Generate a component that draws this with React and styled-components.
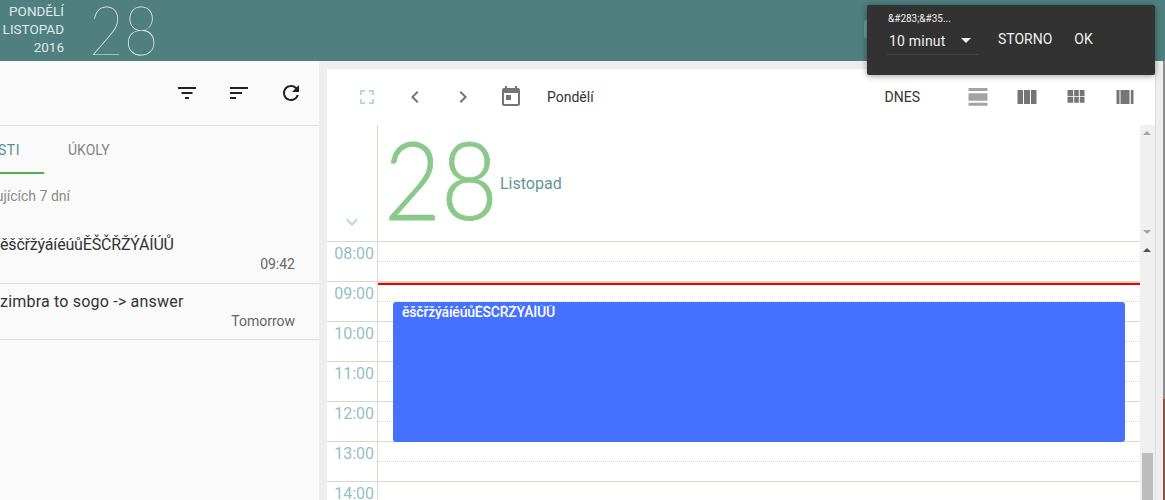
import React from 'react';
import styled, { createGlobalStyle } from 'styled-components';

const GlobalStyle = createGlobalStyle`
	html, body {
		margin: 0;
		padding: 0;
		background: #eeeeee;
		overflow: hidden;
	}
	body {
		font-family: Roboto, "Noto Sans", sans-serif;
	}
`;

const Page = styled.div`
	position: relative;
	width: 1165px;
	height: 500px;
	overflow: hidden;
	display: flex;
	flex-direction: column;
`;

const Header = styled.header`
	height: 61px;
	flex: none;
	background: #4f7f7f;
	display: flex;
	align-items: flex-start;
`;

const HeaderDate = styled.div`
	width: 64px;
	padding-top: 2px;
	text-align: right;
	color: #dfe9e9;
	font-size: 13.5px;
	line-height: 18px;
`;

const HeaderDay = styled.div`
	width: 70px;
	margin: 0 0 0 25px;
	color: #e6efee;
	font-family: Lato, sans-serif;
	font-weight: 100;
	font-size: 68px;
	line-height: 58px;
	transform: scaleX(0.88);
	transform-origin: left center;
`;

const HeaderChip = styled.div`
	width: 10px;
	height: 18px;
	margin: 20px 291px 0 auto;
	border-radius: 2px;
	background: #6d9a99;
`;

const Body = styled.div`
	flex: 1;
	display: flex;
	min-height: 0;
`;

const Sidebar = styled.aside`
	width: 319px;
	flex: none;
	background: #fafafa;
	display: flex;
	flex-direction: column;
	overflow: hidden;
`;

const SideToolbar = styled.div`
	height: 65px;
	flex: none;
	box-sizing: border-box;
	border-bottom: 1px solid #e0e0e0;
	display: flex;
	justify-content: flex-end;
	align-items: center;
	gap: 28px;
	padding: 0 16px 0 0;
	svg {
		display: block;
	}
`;

const Tabs = styled.div`
	height: 48px;
	flex: none;
	display: flex;
	font-size: 14px;
`;

const Tab = styled.div`
	width: ${(p) => p.$width}px;
	flex: none;
	display: flex;
	justify-content: ${(p) => (p.$active ? 'flex-end' : 'flex-start')};
	padding: ${(p) => (p.$active ? '15px 24px 0 0' : '15px 0 0 24px')};
	box-sizing: border-box;
	line-height: 18px;
	letter-spacing: ${(p) => (p.$active ? '0.5px' : '0')};
	white-space: nowrap;
	color: ${(p) => (p.$active ? '#5b8f8f' : '#858585')};
	border-bottom: ${(p) => (p.$active ? '2px solid #4caf50' : 'none')};
	height: 48px;
`;

const SectionNote = styled.div`
	width: 70px;
	height: 53px;
	flex: none;
	display: flex;
	justify-content: flex-end;
	padding-top: 13px;
	box-sizing: border-box;
	font-size: 14px;
	line-height: 18px;
	color: #8a8a8a;
	white-space: nowrap;
`;

const EventRow = styled.div`
	height: ${(p) => p.$height}px;
	flex: none;
	box-sizing: border-box;
	border-bottom: 1px solid #e0e0e0;
	padding: 8px 24px 0 0;
	display: flex;
	flex-direction: column;
`;

const EventTitle = styled.div`
	font-size: 16px;
	line-height: 20px;
	letter-spacing: ${(p) => p.$spacing}px;
	color: #333333;
	white-space: nowrap;
`;

const EventTime = styled.div`
	font-size: 14px;
	line-height: 18px;
	color: #666666;
	text-align: right;
`;

const Main = styled.main`
	flex: 1;
	min-width: 0;
	padding: 8px 8px 0 8px;
	display: flex;
`;

const Card = styled.section`
	flex: 1;
	min-width: 0;
	background: #ffffff;
	box-shadow: 1px 0 0 #dddddd;
	display: flex;
	flex-direction: column;
`;

const CalToolbar = styled.div`
	height: 56px;
	flex: none;
	padding-left: 16px;
	display: flex;
	align-items: center;
	svg {
		display: block;
	}
`;

const ToolIcon = styled.div`
	width: ${(p) => p.$width || 48}px;
	flex: none;
	display: flex;
	justify-content: center;
	color: ${(p) => p.$color || '#757575'};
`;

const ToolLabel = styled.div`
	font-size: 14px;
	color: #333333;
	margin-left: 12px;
	flex: 1;
`;

const TodayLabel = styled.div`
	font-size: 14px;
	color: #333333;
	margin-right: 33px;
`;

const ViewIcons = styled.div`
	display: flex;
	margin-right: 6px;
`;

const ScrollArea = styled.div`
	flex: 1;
	min-height: 0;
	display: flex;
`;

const Content = styled.div`
	flex: 1;
	min-width: 0;
	display: flex;
	flex-direction: column;
`;

const DayHead = styled.div`
	height: 117px;
	flex: none;
	box-sizing: border-box;
	display: flex;
	border-bottom: 1px solid #e0d8c6;
`;

const DayHeadGutter = styled.div`
	width: 50px;
	flex: none;
	border-right: 1px solid #e0d8c6;
	display: flex;
	justify-content: center;
	align-items: flex-end;
	padding-bottom: 7px;
	color: #b2dcdc;
	svg {
		display: block;
	}
`;

const DayHeadInfo = styled.div`
	flex: 1;
	display: flex;
	padding-left: 6px;
`;

const BigDay = styled.div`
	width: 112px;
	flex: none;
	font-family: Lato, sans-serif;
	font-weight: 300;
	font-size: 109px;
	line-height: 106px;
	color: #8bc98a;
	-webkit-text-stroke: 0.8px #8bc98a;
	transform: scaleX(0.9);
	transform-origin: left center;
`;

const MonthName = styled.div`
	font-size: 16px;
	color: #5f9797;
	margin: 49px 0 0 4px;
	line-height: 20px;
`;

const Grid = styled.div`
	position: relative;
	flex: 1;
	min-height: 0;
	overflow: hidden;
`;

const HourRow = styled.div`
	height: 40px;
	box-sizing: border-box;
	border-bottom: 1px solid #e0d8c6;
	display: flex;
`;

const HourLabel = styled.div`
	width: 47px;
	flex: none;
	padding-right: 3px;
	text-align: right;
	font-size: 16px;
	line-height: 24px;
	color: #96bfbf;
	border-right: 1px solid #e0d8c6;
`;

const HourSlot = styled.div`
	flex: 1;
	height: 20px;
	box-sizing: border-box;
	border-bottom: 1px dotted #e0d8c6;
`;

const NowLine = styled.div`
	position: absolute;
	left: 51px;
	right: 0;
	top: 41px;
	height: 2px;
	background: #f00000;
	box-shadow: 0 -1px 0 #e0d8c6;
`;

const EventBlock = styled.div`
	position: absolute;
	left: 66px;
	right: 15px;
	top: 60px;
	height: 140px;
	border-radius: 3px;
	background: #4671ff;
	color: #ffffff;
	padding: 3px 0 0 9px;
	box-sizing: border-box;
`;

const EventBlockTitle = styled.div`
	height: 14px;
	overflow: hidden;
	font-size: 14px;
	font-weight: 500;
	line-height: 14px;
	letter-spacing: -0.2px;
	white-space: nowrap;
`;

const ScrollBar = styled.div`
	width: 15px;
	flex: none;
	background: #f0f0f0;
	position: relative;
`;

const ScrollArrow = styled.div`
	position: absolute;
	left: 3px;
	top: ${(p) => p.$top}px;
	width: 0;
	height: 0;
	border-left: 4px solid transparent;
	border-right: 4px solid transparent;
	${(p) => (p.$up ? `border-bottom: 4px solid ${p.$color};` : `border-top: 4px solid ${p.$color};`)}
`;

const ScrollThumb = styled.div`
	position: absolute;
	left: 2px;
	right: 2px;
	top: 328px;
	bottom: 0;
	background: #bdbdbd;
`;

const PageScroll = styled.div`
	width: 2px;
	flex: none;
	background: linear-gradient(#8c8c8c 338px, #8d5540 338px);
`;

const Toast = styled.div`
	position: absolute;
	left: 867px;
	top: 5px;
	width: 288px;
	height: 70px;
	background: #323232;
	border-radius: 2px;
	box-shadow: 0 1px 6px rgba(0, 0, 0, 0.4);
	color: #f0f0f0;
`;

const ToastTitle = styled.div`
	position: absolute;
	left: 21px;
	top: 7px;
	font-size: 10px;
	line-height: 13px;
	white-space: nowrap;
`;

const ToastSelect = styled.div`
	position: absolute;
	left: 20px;
	top: 19px;
	width: 89px;
	height: 26px;
	padding: 4px 0 0 2px;
	border-bottom: 1px solid #444444;
	display: flex;
	justify-content: space-between;
	align-items: center;
	font-size: 14px;
	letter-spacing: 0.2px;
`;

const Caret = styled.span`
	width: 0;
	height: 0;
	margin: 0 7px 2px 0;
	border-left: 5px solid transparent;
	border-right: 5px solid transparent;
	border-top: 5px solid #f0f0f0;
`;

const ToastActions = styled.div`
	position: absolute;
	left: 131px;
	top: 25px;
	display: flex;
	gap: 22px;
	font-size: 14px;
	line-height: 18px;
`;

const Icon = ({ d, size = 24, color = 'currentColor' }) => (
	<svg width={size} height={size} viewBox="0 0 24 24" fill={color}>
		<path d={d} />
	</svg>
);

const HOURS = ['08:00', '09:00', '10:00', '11:00', '12:00', '13:00', '14:00'];

const App = () => (
	<Page>
		<GlobalStyle />
		<Header>
			<HeaderDate>
				PONDĚLÍ
				<br />
				LISTOPAD
				<br />
				2016
			</HeaderDate>
			<HeaderDay>28</HeaderDay>
			<HeaderChip />
		</Header>
		<Body>
			<Sidebar>
				<SideToolbar>
					<Icon color="#212121" d="M3 6h18v2H3zM6.5 11h11v2h-11zM10 16h4v2h-4z" />
					<Icon color="#212121" d="M3 6h18v2H3zM3 11h12v2H3zM3 16h6v2H3z" />
					<Icon
						color="#212121"
						d="M17.65 6.35A7.958 7.958 0 0 0 12 4c-4.42 0-7.99 3.58-7.99 8s3.57 8 7.99 8c3.73 0 6.84-2.55 7.73-6h-2.08A5.99 5.99 0 0 1 12 18c-3.31 0-6-2.69-6-6s2.69-6 6-6c1.66 0 3.14.69 4.22 1.78L13 11h7V4l-2.35 2.35z"
					/>
				</SideToolbar>
				<Tabs>
					<Tab $active $width={44}>
						UDÁLOSTI
					</Tab>
					<Tab $width={100}>ÚKOLY</Tab>
				</Tabs>
				<SectionNote>V následujících 7 dní</SectionNote>
				<EventRow $height={57}>
					<EventTitle $spacing={-0.18}>ěščřžýáíéúůĚŠČŘŽÝÁÍÚŮ</EventTitle>
					<EventTime>09:42</EventTime>
				</EventRow>
				<EventRow $height={56}>
					<EventTitle $spacing={0.2}>zimbra to sogo -&gt; answer</EventTitle>
					<EventTime>Tomorrow</EventTime>
				</EventRow>
			</Sidebar>
			<Main>
				<Card>
					<CalToolbar>
						<ToolIcon $color="#b2dcdc">
							<Icon d="M7 14H5v5h5v-2H7v-3zM5 10h2V7h3V5H5v5zM17 17h-3v2h5v-5h-2v3zM14 5v2h3v3h2V5h-5z" />
						</ToolIcon>
						<ToolIcon>
							<Icon d="M15.41 7.41 14 6l-6 6 6 6 1.41-1.41L10.83 12z" />
						</ToolIcon>
						<ToolIcon>
							<Icon d="M10 6 8.59 7.41 13.17 12l-4.58 4.59L10 18l6-6z" />
						</ToolIcon>
						<ToolIcon>
							<Icon d="M19 3h-1V1h-2v2H8V1H6v2H5c-1.11 0-1.99.9-1.99 2L3 19c0 1.1.89 2 2 2h14c1.1 0 2-.9 2-2V5c0-1.1-.9-2-2-2zm0 16H5V8h14v11zM7 10h5v5H7z" />
						</ToolIcon>
						<ToolLabel>Pondělí</ToolLabel>
						<TodayLabel>DNES</TodayLabel>
						<ViewIcons>
							<ToolIcon $width={49}>
								<Icon d="M2.5 3h19v3h-19zM2.5 8.3h19v7.4h-19zM2.5 17.7h19v3h-19z" color="#a3a3a3" />
							</ToolIcon>
							<ToolIcon $width={49}>
								<Icon d="M2.5 5H8v14H2.5zM9 5h6v14H9zM16 5h5.5v14H16z" />
							</ToolIcon>
							<ToolIcon $width={49}>
								<Icon d="M3.5 5h5.7v6H3.5zM10.2 5h4.6v6h-4.6zM15.8 5h4.7v6h-4.7zM3.5 11.7h5.7v6H3.5zM10.2 11.7h4.6v6h-4.6zM15.8 11.7h4.7v6h-4.7z" />
							</ToolIcon>
							<ToolIcon $width={49}>
								<Icon d="M3.5 5h3v14h-3zM7.5 5h9v14h-9zM17.8 5h2.7v14h-2.7z" />
							</ToolIcon>
						</ViewIcons>
					</CalToolbar>
					<ScrollArea>
						<Content>
							<DayHead>
								<DayHeadGutter>
									<Icon color="#b2dcdc" d="M16.59 8.59 12 13.17 7.41 8.59 6 10l6 6 6-6z" />
								</DayHeadGutter>
								<DayHeadInfo>
									<BigDay>28</BigDay>
									<MonthName>Listopad</MonthName>
								</DayHeadInfo>
							</DayHead>
							<Grid>
								{HOURS.map((hour) => (
									<HourRow key={hour}>
										<HourLabel>{hour}</HourLabel>
										<HourSlot />
									</HourRow>
								))}
								<NowLine />
								<EventBlock>
									<EventBlockTitle>ěščřžýáíéúůĚŠČŘŽÝÁÍÚŮ</EventBlockTitle>
								</EventBlock>
							</Grid>
						</Content>
						<ScrollBar>
							<ScrollArrow $up $top={6} $color="#a3a3a3" />
							<ScrollArrow $top={105} $color="#a3a3a3" />
							<ScrollArrow $up $top={123} $color="#505050" />
							<ScrollThumb />
						</ScrollBar>
					</ScrollArea>
				</Card>
			</Main>
			<PageScroll />
		</Body>
		<Toast>
			<ToastTitle>&amp;#283;&amp;#35...</ToastTitle>
			<ToastSelect>
				10 minut
				<Caret />
			</ToastSelect>
			<ToastActions>
				<span>STORNO</span>
				<span>OK</span>
			</ToastActions>
		</Toast>
	</Page>
);

export default App;
